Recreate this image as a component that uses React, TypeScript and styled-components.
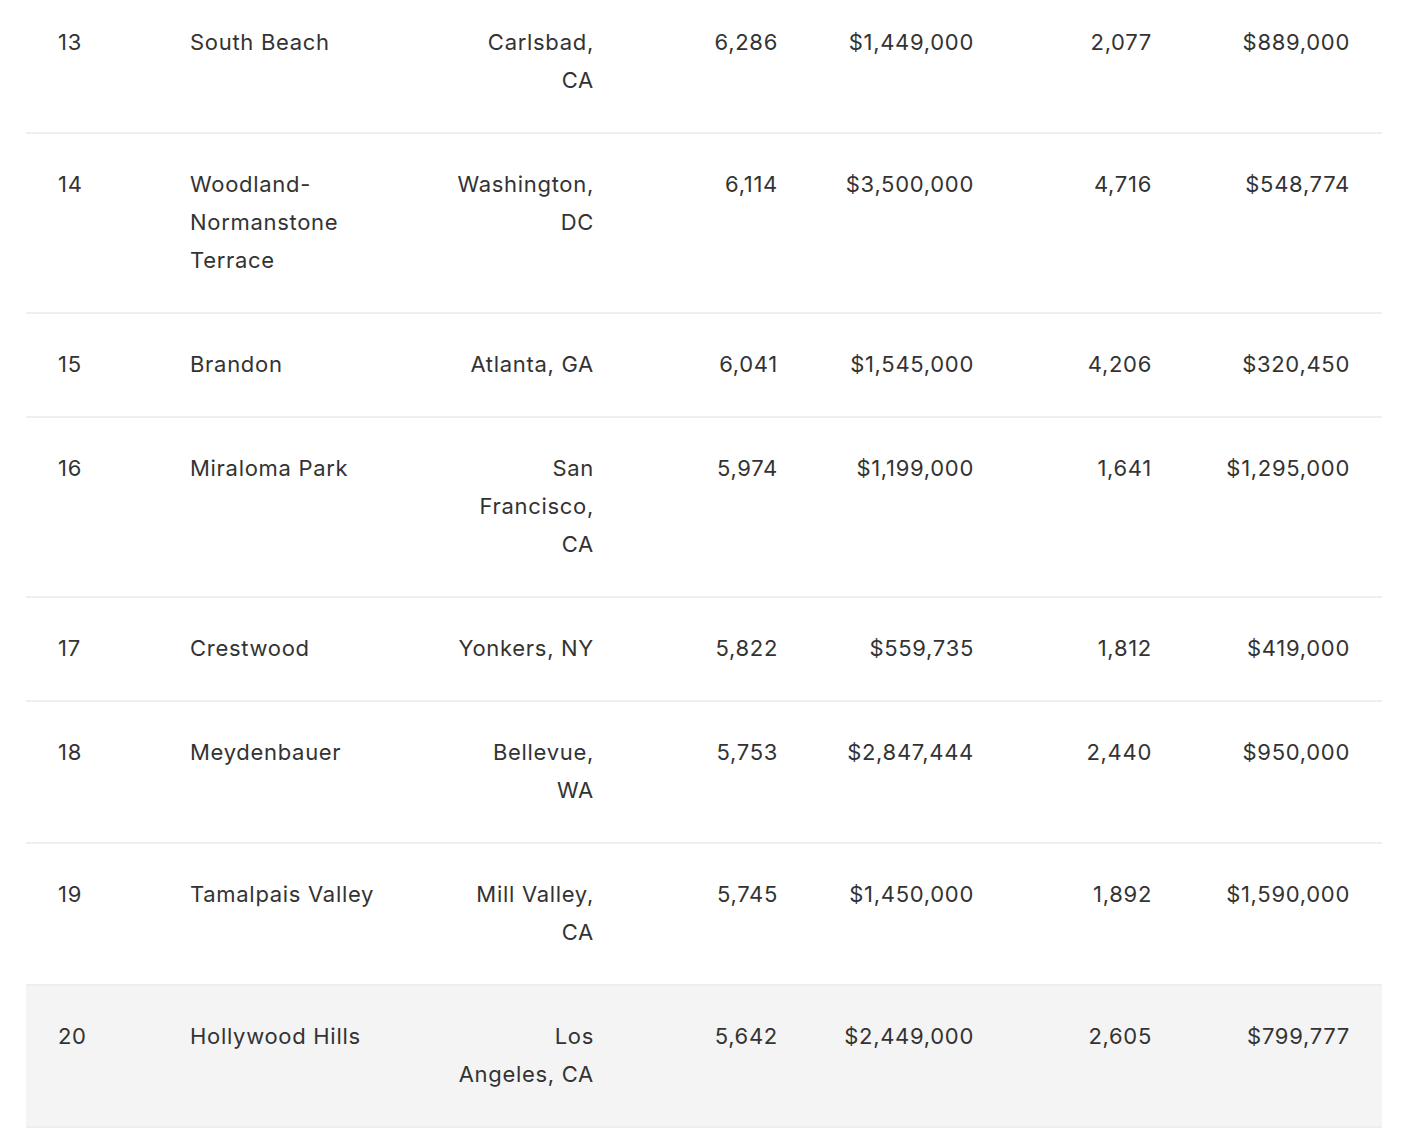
import React from "react";
import styled, { createGlobalStyle } from "styled-components";

const Global = createGlobalStyle`
  html, body {
    margin: 0;
    padding: 0;
    background: #ffffff;
  }
  body {
    font-family: Inter, "Open Sans", "Liberation Sans", sans-serif;
    color: #333333;
    -webkit-font-smoothing: antialiased;
  }
`;

const Page = styled.div`
  padding: 0 38px 0 26px;
  margin-top: -8px;
`;

const Table = styled.table`
  width: 1356px;
  border-collapse: collapse;
  table-layout: fixed;
  font-size: 22px;
  line-height: 38px;
  letter-spacing: 0.7px;
  color: #333333;
`;

const Col = styled.col<{ $w: number }>`
  width: ${(p) => p.$w}px;
`;

const Row = styled.tr<{ $shaded?: boolean }>`
  background: ${(p) => (p.$shaded ? "#f4f4f4" : "#ffffff")};
  border-bottom: 2px solid #eeeeee;
`;

const Cell = styled.td<{ $align?: "left" | "right" }>`
  padding: 31px 32px 33px;
  vertical-align: top;
  text-align: ${(p) => p.$align ?? "left"};
  overflow-wrap: normal;
`;

type Item = {
  rank: number;
  name: string;
  city: string;
  pop: string;
  price: string;
  sqft: string;
  income: string;
};

const rows: Item[] = [
  { rank: 13, name: "South Beach", city: "Carlsbad, CA", pop: "6,286", price: "$1,449,000", sqft: "2,077", income: "$889,000" },
  { rank: 14, name: "Woodland-Normanstone Terrace", city: "Washington, DC", pop: "6,114", price: "$3,500,000", sqft: "4,716", income: "$548,774" },
  { rank: 15, name: "Brandon", city: "Atlanta, GA", pop: "6,041", price: "$1,545,000", sqft: "4,206", income: "$320,450" },
  { rank: 16, name: "Miraloma Park", city: "San Francisco, CA", pop: "5,974", price: "$1,199,000", sqft: "1,641", income: "$1,295,000" },
  { rank: 17, name: "Crestwood", city: "Yonkers, NY", pop: "5,822", price: "$559,735", sqft: "1,812", income: "$419,000" },
  { rank: 18, name: "Meydenbauer", city: "Bellevue, WA", pop: "5,753", price: "$2,847,444", sqft: "2,440", income: "$950,000" },
  { rank: 19, name: "Tamalpais Valley", city: "Mill Valley, CA", pop: "5,745", price: "$1,450,000", sqft: "1,892", income: "$1,590,000" },
  { rank: 20, name: "Hollywood Hills", city: "Los Angeles, CA", pop: "5,642", price: "$2,449,000", sqft: "2,605", income: "$799,777" },
];

const widths = [132, 266, 202, 184, 196, 178, 198];

export default function App() {
  return (
    <>
      <Global />
      <Page>
        <Table>
          <colgroup>
            {widths.map((w, i) => (
              <Col key={i} $w={w} />
            ))}
          </colgroup>
          <tbody>
            {rows.map((r) => (
              <Row key={r.rank} $shaded={r.rank === 20}>
                <Cell>{r.rank}</Cell>
                <Cell>{r.name}</Cell>
                <Cell $align="right">{r.city}</Cell>
                <Cell $align="right">{r.pop}</Cell>
                <Cell $align="right">{r.price}</Cell>
                <Cell $align="right">{r.sqft}</Cell>
                <Cell $align="right">{r.income}</Cell>
              </Row>
            ))}
          </tbody>
        </Table>
      </Page>
    </>
  );
}
